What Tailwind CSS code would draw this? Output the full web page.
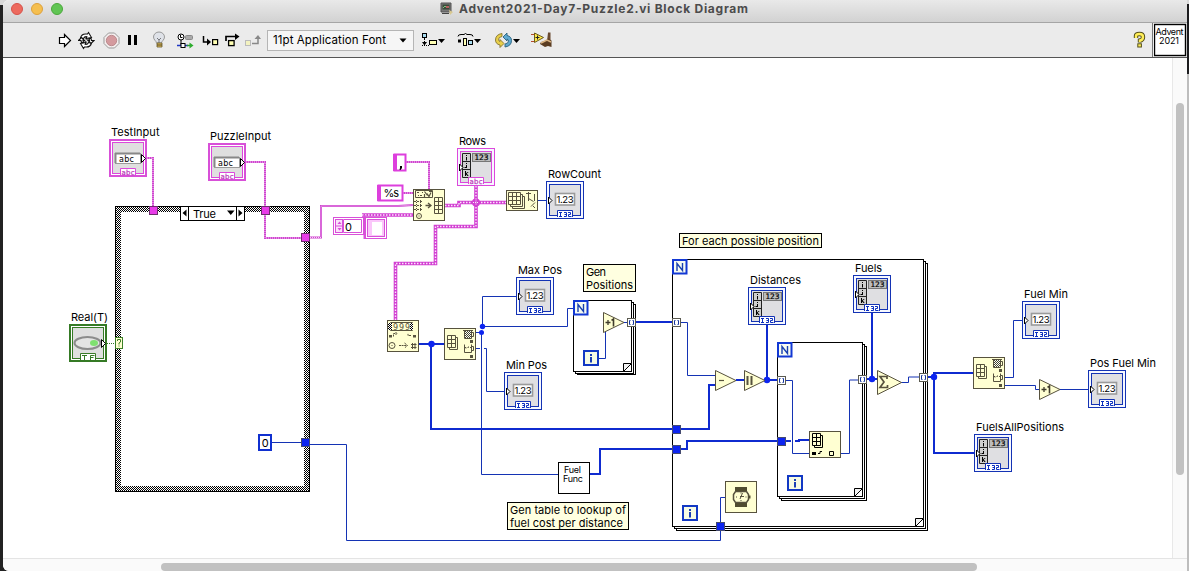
<!DOCTYPE html>
<html lang="en">
<head>
<meta charset="utf-8">
<title>Advent2021-Day7-Puzzle2.vi Block Diagram</title>
<script src="https://cdn.jsdelivr.net/npm/@tailwindcss/browser@4"></script>
</head>
<body class="h-[571px] w-[1189px] overflow-hidden bg-[#222] font-[Inter,'Liberation_Sans',sans-serif] text-black">
<div class="flex h-full bg-linear-to-b from-[#d8d8d8] from-[5px] to-[#222] to-[5px]">
<main class="ml-[3px] flex w-[1184px] flex-col overflow-hidden rounded-tl-md rounded-bl-md bg-white">
  <header class="flex h-[23px] shrink-0 border-b border-[#a5a5a5] bg-linear-to-b from-[#e9e9e9] to-[#d2d2d2]">
    <div class="ml-2 mt-[3px] flex gap-2">
      <span class="size-3 rounded-full border border-[#d6524a] bg-[#ed6a5e]"></span>
      <span class="size-3 rounded-full border border-[#dca03c] bg-[#f5bf4f]"></span>
      <span class="size-3 rounded-full border border-[#4ba73c] bg-[#61c554]"></span>
    </div>
    <svg class="ml-[376px] mt-[1px] shrink-0" width="16" height="16" viewBox="0 0 16 16"><path d="M2 2h10v9H2z" fill="#777" stroke="#555"/><path d="M3.500 3.500h7v5h-7z" fill="#3a4a3a"/><path d="M4 7l2-2 2 2 2-2" stroke="#7ec27e" fill="none"/><path d="M7 5h3v2H7z" fill="#b46060"/><path d="M10 9l4 2-3 3z" fill="#d8c890"/><path d="M3 12h7v1H3z" fill="#444"/></svg>
    <svg class="shrink-0" width="296" height="22" viewBox="455 0 296 22"><text x="459" y="13" font-size="12" font-weight="700" fill="#4c4c4c" textLength="289">Advent2021-Day7-Puzzle2.vi Block Diagram</text></svg>
  </header>
  <div class="flex h-[35px] shrink-0 items-center border-b border-[#555] bg-[#ebebeb]">
    <svg class="ml-[55px] shrink-0" width="14" height="24" viewBox="58 28 14 24"><path d="M59.500 37.500h5v-3l6 6-6 6v-3h-5z" fill="#fff" stroke="#000" stroke-width="1.200"/></svg>
    <svg class="ml-1.5 shrink-0" width="17" height="24" viewBox="78 28 17 24"><g fill="#fff" stroke="#111" stroke-width="1.100"><path d="M80.500 38q1-4 5-4h2l1-1.500 3 5-5.500 1 .8-1.800q-2.300-.4-3.300 1.800z"/><path d="M91.500 43q-1 4-5 4h-2l-1 1.500-3-5 5.500-1-.8 1.800q2.300.4 3.300-1.800z"/><path d="M78.500 40.500l3-3 3.500 3.500-2-.5.500 2h-2l-.5-2zM94 40.500l-3 3-3.500-3.500 2 .5-.5-2h2l.5 2z"/></g></svg>
    <svg class="ml-2 shrink-0" width="17" height="24" viewBox="103 28 17 24"><path d="M108.500 33h6l4.500 4.500v6l-4.500 4.500h-6l-4.500-4.500v-6z" fill="#f4eeee" stroke="#999"/><circle cx="111.500" cy="40.500" r="5.200" fill="#d49a9e" stroke="#bb8a8d"/></svg>
    <svg class="ml-2 shrink-0" width="10" height="24" viewBox="128 28 10 24"><path d="M128 35h3v10h-3zM134 35h3v10h-3z"/></svg>
    <svg class="ml-[14px] shrink-0" width="14" height="24" viewBox="152 28 14 24"><path d="M156.500 43c0-2-3-3-3-6a5.500 5 0 0 1 11 0c0 3-3 4-3 6z" fill="#dfe2e8" stroke="#999"/><path d="M157 38l2 2 2-2M159 40v3" fill="none" stroke="#77797e"/><path d="M157 43h5v4h-5z" fill="#e0bd59" stroke="#63552c" stroke-width=".8"/><path d="M157 45h5" stroke="#554722"/></svg>
    <svg class="ml-[11px] shrink-0" width="17" height="24" viewBox="177 28 17 24"><circle cx="181" cy="37" r="3" fill="#fff" stroke="#000"/><path d="M180.500 35v2.500h2M181 40v6" fill="none" stroke="#000"/><rect x="185.500" y="35.500" width="7" height="4" rx="1" fill="#aaa" stroke="#888"/><path d="M177 45.500h5M185 45.500h3" stroke="#1d36c4" stroke-width="1.500"/><rect x="181" y="43.500" width="4" height="4" fill="#fff" stroke="#000"/><path d="M187 45.500h3" stroke="#2a9a2a" stroke-width="1.500"/><path d="M189.500 42.500l4 3-4 3z" fill="#2fad2f"/></svg>
    <svg class="ml-2 shrink-0" width="18" height="24" viewBox="202 28 18 24"><path d="M203.500 36v6h5" fill="none" stroke="#000" stroke-width="1.500"/><path d="M207 38.500l4 3.500-4 3.500z"/><rect x="212.600" y="39.600" width="5" height="5" fill="#ffffb4" stroke="#000" stroke-width="1.200"/></svg>
    <svg class="ml-1 shrink-0" width="16" height="24" viewBox="224 28 16 24"><path d="M226 41v-4.500h10" fill="none" stroke="#000" stroke-width="1.700"/><path d="M235 33.500l4.500 3-4.500 3.500z"/><rect x="228.600" y="40.600" width="5.500" height="5" fill="#ffffb4" stroke="#000" stroke-width="1.300"/></svg>
    <svg class="ml-1 shrink-0" width="17" height="24" viewBox="244 28 17 24"><rect x="245.500" y="40.500" width="5" height="5" fill="#f3f2c0" stroke="#bbb"/><path d="M252 43.500h6v-5" fill="none" stroke="#888" stroke-width="1.500"/><path d="M254.500 39l3.500-4 3 4z" fill="#888"/></svg>
    <div class="ml-[6px] flex h-[21px] w-[147px] shrink-0 items-center justify-between border border-[#b5b5b5] bg-[#f6f6f6] pl-[5px] pr-1.5">
      <svg width="116" height="18" viewBox="0 0 116 18"><text x="0" y="12.500" font-size="11.500" textLength="113">11pt Application Font</text></svg>
      <svg width="8" height="5" viewBox="0 0 8 5"><path d="M.500.500h7L4 4.500z"/></svg>
    </div>
    <svg class="ml-[6px] shrink-0" width="26" height="24" viewBox="420 28 26 24"><rect x="422.500" y="33.500" width="4" height="4" fill="#a8dcf0" stroke="#000"/><path d="M424.500 38v6" stroke="#000" stroke-dasharray="2 1"/><path d="M422 42h5l-2.500 3.500z"/><rect x="429.500" y="40.500" width="7" height="4" fill="#ffffb4" stroke="#000"/><path d="M422 45.500h7" stroke="#000" stroke-dasharray="1 1"/><path d="M438 39h7l-3.500 4z"/></svg>
    <svg class="ml-[11px] shrink-0" width="25" height="24" viewBox="457 28 25 24"><path d="M458 36.500q0-2 3-2h3l1.500-1 1.500 1h3q3 0 3 2" fill="none" stroke="#000"/><path d="M458 39.500h3v3h-3z"/><rect x="463.500" y="38.500" width="3" height="7" fill="#ffffb4" stroke="#000"/><rect x="468.500" y="40.500" width="4" height="4" fill="#a8dcf0" stroke="#000"/><path d="M474 39h7l-3.500 4z"/></svg>
    <svg class="ml-3 shrink-0" width="27" height="24" viewBox="494 28 27 24"><path d="M502 33.500q-6.500 1-6.500 6.500 0 4 4.500 5v2.500l4-4-4-4v2q-1.500-.5-1.500-2 0-2.500 3.500-3z" fill="#e8cf4a" stroke="#84742c" stroke-width=".9"/><path d="M505 47q6.500-1 6.500-6.500 0-4-4.500-5V33l-4 4 4 4v-2q1.500.5 1.500 2 0 2.500-3.500 3z" fill="#5fa9d0" stroke="#28627f" stroke-width=".9"/><path d="M513 39h7l-3.500 4z"/></svg>
    <svg class="ml-2.5 shrink-0" width="22" height="24" viewBox="531 28 22 24"><path d="M531 34.500h4M531 41.500h4" stroke="#b54a2c"/><path d="M548 32.500h2.500v7l.5 3-4-1z" fill="#6a4a30"/><path d="M541 42q5-1 7-3.500l3.500 2v6.500l-3.500-1-3 1-5-3z" fill="#5a3c22"/><path d="M541 43l6-3 4 2" stroke="#d9b382" stroke-width="1.500" fill="none"/><path d="M534.500 33l9 4.500-9 5z" fill="#ffe94b" stroke="#6e5b1b"/><path d="M537.500 35.500v4M535.500 37.500h4" stroke="#222"/></svg>
    <svg class="ml-auto mr-[5px] shrink-0" width="14" height="24" viewBox="1133 28 14 24"><path d="M1136 38v-2q0-2 3.500-2t3.500 3-3 3.500v2" fill="none" stroke="#55501c" stroke-width="4.400"/><path d="M1136 38v-2q0-2 3.500-2t3.500 3-3 3.500v1.500" fill="none" stroke="#ffee58" stroke-width="2.400"/><rect x="1137.800" y="43.800" width="3.600" height="3.200" fill="#ffee58" stroke="#55501c"/></svg>
    <div class="flex h-full w-[35px] items-center border-l border-[#777]">
      <svg class="ml-px" width="33" height="34" viewBox="1154 23 33 34"><rect x="1154.500" y="24.500" width="31" height="31" fill="#fff" stroke="#000" stroke-width="1.400"/><text x="1155.500" y="35" font-size="9" textLength="28">Advent</text><text x="1159" y="44" font-size="9" textLength="20">2021</text></svg>
    </div>
  </div>
  <div class="flex h-[500px] shrink-0">
    <svg class="block shrink-0" width="1169" height="500" viewBox="3 58 1169 500" font-size="11" font-family="Inter, 'Liberation Sans', sans-serif">
      <defs>
        <pattern id="chk" width="2" height="2" patternUnits="userSpaceOnUse"><rect width="2" height="2" fill="#fff"/><path d="M0 0h1v1H0zM1 1h1v1H1z" shape-rendering="crispEdges"/></pattern>
        <pattern id="chk2" width="4" height="4" patternUnits="userSpaceOnUse"><rect width="4" height="4" fill="#fff"/><path d="M0 0h1v1H0zM2 0h1v1H2zM1 1h1v1H1zM3 1h1v1H3zM0 2h1v1H0zM2 2h1v1H2zM1 3h1v1H1zM3 3h1v1H3z" shape-rendering="crispEdges"/></pattern>
        <g id="tri"><path d="M2.500 16v7l3.500-3.500z" fill="#fff" stroke="#000"/></g>
        <g id="tab"><path d="M11.500 36v-6.500h15V36" fill="#fff" stroke="currentColor"/></g>
        <g id="i32"><use href="#tab"/><path d="M13 31.500h3M14.500 31.500v4M13 35.500h3M18 31.500h2.500v4H18M18.500 33.500h2M22 31.500h2.500v2h-2v2h3" fill="none" stroke="#0a2ec0"/></g>
        <g id="frame"><rect x=".5" y=".5" width="37" height="37" fill="#f6f8ff" stroke="currentColor"/><rect x="3.500" y="3.500" width="31" height="31" fill="#dfdfe2" stroke="currentColor"/></g>
        <g id="num" color="#1433b4"><use href="#frame"/><rect x="9.500" y="12.500" width="19" height="11.500" fill="#fff" stroke="#9a9a9a" stroke-width="1.600"/><text x="10.500" y="22" font-size="9.500" textLength="17">1.23</text><use href="#tri"/><use href="#i32"/></g>
        <g id="ijk"><use href="#frame"/><path d="M5.500 5.500h8v24h-8zM5.500 13.500h8M5.500 21.500h8" fill="#cfcfcf" stroke="#222"/><path d="M9 7h1v1H9zM9 9h1v3.500H9zM9 15h1v1H9zM9 17h1v3H7.500v-1H9zM8 23h1v2.200l1.500-1.200h1.200l-2 1.600 2 2.400h-1.200L9 26.500V28H8z"/><rect x="15.500" y="5.500" width="18" height="8" fill="#bcbcbc" stroke="#777"/><text x="17.500" y="12.300" font-family="'DejaVu Sans'" font-size="7.500" textLength="14" stroke="#000" stroke-width=".2">123</text><use href="#tri"/></g>
        <g id="arr" color="#1433b4"><use href="#ijk"/><use href="#i32"/></g>
        <g id="abc" color="#dc48dc"><use href="#tab"/><text x="12.500" y="36.300" font-family="'DejaVu Sans'" font-size="7" fill="#b832b8" stroke="#b832b8" stroke-width=".2" textLength="13">abc</text></g>
        <g id="str" color="#dc48dc"><rect x="1" y="1" width="36" height="36" fill="#fff" stroke="#d850d8" stroke-width="2"/><rect x="3.500" y="3.500" width="31" height="31" fill="#dfdfdf" stroke="currentColor"/><rect x="6.500" y="14.500" width="25" height="10" fill="#fff" stroke="#9a9a9a"/><path d="M6 14.500h25M6.500 14v10" stroke="#888" stroke-width="2"/><text x="10" y="22.500" font-family="'DejaVu Sans'" font-size="8" textLength="15">abc</text><path d="M32.500 15.500v8l4-4z" fill="#fff" stroke="#000"/><use href="#abc"/></g>
        <g id="N"><rect x="1" y="1" width="13.500" height="13.500" fill="#f6fbf2" stroke="#1238d4" stroke-width="2"/><path d="M5 12V4.500l5.500 7V4" fill="none" stroke="#173fb0" stroke-width="1.400"/></g>
        <g id="I"><rect x="1" y="1" width="14" height="14" fill="#f6fbe4" stroke="#1238c4" stroke-width="2"/><path d="M7 4h2v2H7zM7 7h2v5.500H7z" fill="#1a3eb4"/></g>
        <g id="ai"><rect x=".5" y=".5" width="8" height="8" fill="#fff" stroke="#5a5a50"/><path d="M3.500 2.500h-1v4h1M5.500 2.500h1v4h-1" fill="none" stroke="#16369c"/></g>
        <g id="tb"><rect x=".5" y=".5" width="8" height="8" fill="#0c24f0" stroke="#444a70"/></g>
        <g id="tp"><rect x=".5" y=".5" width="8" height="8" fill="#e83ce8" stroke="#6c2c6c"/></g>
        <g id="fold"><path d="M0 8.500V0h9z" fill="#f2f2f2"/><path d="M8.500 .5H.5v8l8-8" fill="none" stroke="#000"/></g>
        <g id="mm"><rect x=".5" y=".5" width="31" height="31" fill="#ffffd2" stroke="#57523e"/><path d="M3.500 7.500h8v12h-8zM3.500 11.500h8M3.500 15.500h8M7.500 7.500v12M11.500 9.500h2v12h-8v-2" fill="none" stroke="#57523e"/><rect x="20" y="3" width="8" height="7" fill="url(#chk)" opacity=".75"/><path d="M20.500 2.500h7v8h-7zM27.500 4.500h2v4h-2M20.500 16.500v8h7v-8M21 19.500h1v1M23.500 19.500h1v-1M26 19.500h1M27.500 18.500h2v4h-2M19 2.500h10" fill="none" stroke="#57523e"/><path d="M26 12h3v3h-3zM26 27h3v3h-3z" fill="#57523e"/></g>
        <g id="inc" fill="none" stroke="#403c2c"><path d="M2 10.500h5M4.500 8v5" stroke-width="1.300"/><path d="M8 8.300l2-1.300v7.500" stroke-width="1.600"/></g>
      </defs>
      <rect x="3" y="58" width="1169" height="500" fill="#fff"/>

      <!-- structures -->
      <path fill-rule="evenodd" fill="url(#chk2)" d="M115 206h195v286H115zM121 212v274h183V212z"/>
      <rect x="115.500" y="206.500" width="194" height="285" fill="none" stroke="#000"/>
      <g fill="#fff" stroke="#000">
        <rect x="577.500" y="304.500" width="58" height="70"/><rect x="575.500" y="302.500" width="58" height="71"/><rect x="573.500" y="300.500" width="58" height="71"/>
        <rect x="676.500" y="263.500" width="251" height="267"/><rect x="674.500" y="261.500" width="251" height="267"/><rect x="672.500" y="259.500" width="251" height="267"/>
        <rect x="781.500" y="346.500" width="85" height="154"/><rect x="779.500" y="344.500" width="85" height="154"/><rect x="777.500" y="342.500" width="85" height="154"/>
      </g>
      <use href="#fold" x="623" y="363"/><use href="#fold" x="915" y="518"/><use href="#fold" x="854" y="488"/>

      <!-- string wires -->
      <path d="M147 158h6v49M246 162h19v76h37M310 237.500h11V206h77l15-1M406 162h23v27M403 193h10" fill="none" stroke="#cf45cf" stroke-width="2"/>
      <path d="M147 158h6v49M246 162h19v76h37M310 237.500h11V206h77l15-1M406 162h23v27M403 193h10" fill="none" stroke="#f6cdf6" stroke-dasharray="1 1"/>
      <path fill="none" stroke="#d23fd2" stroke-width="3.600" d="M362 215h51M445 205.500h14v-3h47M476 186v40.500h-40.500v37h-40V320"/>
      <path fill="none" stroke="#fbe6fb" stroke-width="1.400" stroke-dasharray="1.500 1.500" d="M362 215h51M445 205.500h14v-3h47M476 186v40.500h-40.500v37h-40V320"/>
      <circle cx="476" cy="202.500" r="4" fill="#d23fd2"/><path d="M473 202.500h6M476 199.500v6" stroke="#fbe6fb" stroke-dasharray="1 1"/>

      <!-- scalar wires -->
      <path fill="none" stroke="#1433b4" d="M538 200.500h8M476 332.500h5M482.500 326V296.500H517M482.500 326.500h85v-18h6M481.500 332.500v142h77M476 348.500h4M484 348.500h2.500v43h18M599 358.500h6.500V332M624 322.500h4M681 322.500h6.500v53H716M786 380.500h6.500v73H809M841 453.500h8.500v-73.500h9M901 382.500h7.500v-5.500h11M725 497.500h-4.500v43h-374v-96H310M272 442.500h29M1005 377.500h8.500v-57h9M1005 385.500h30.500v4h4M1060 389.500h28"/>
      <!-- array wires -->
      <path fill="none" stroke="#0f2bd0" stroke-width="2" d="M419 344h25M431 344v85h242M635 322h38M681 429h28v-44h7M590 474h10v-25h73M681 449h6v-8h91M786 441h5M795 441h4v-1h10M736 380h8M765 380h13M767 325v55M867 379h10M872 313v66M927 377h7M934 377v-4h39M934 377v76h40"/>
      <g fill="#0c24f0"><circle cx="431.500" cy="344" r="3.200"/><circle cx="482.500" cy="326.500" r="2.700"/><circle cx="481.500" cy="332.500" r="2.500"/><circle cx="767" cy="380" r="3.200"/><circle cx="872" cy="379" r="3.200"/><circle cx="934" cy="377" r="3.200"/></g>

      <!-- tunnels -->
      <use href="#tp" x="149" y="206"/><use href="#tp" x="261" y="206"/><use href="#tp" x="301" y="233"/>
      <use href="#tb" x="301" y="438"/><use href="#tb" x="672" y="425"/><use href="#tb" x="672" y="445"/><use href="#tb" x="777" y="437"/><use href="#tb" x="716" y="522"/>
      <use href="#ai" x="627" y="318"/><use href="#ai" x="672" y="318"/><use href="#ai" x="777" y="376"/><use href="#ai" x="858" y="375"/><use href="#ai" x="919" y="373"/>
      <use href="#N" x="573" y="300"/><use href="#N" x="672" y="259"/><use href="#N" x="777" y="342"/>
      <use href="#I" x="583" y="350"/><use href="#I" x="682" y="505"/><use href="#I" x="787" y="475"/>

      <!-- case selector -->
      <rect x="180.500" y="206.500" width="64" height="14" fill="#fff" stroke="#000"/><path d="M188.500 206v15M236.500 206v15" stroke="#000"/><path d="M186.500 209.500v7l-4-3.500zM238.500 209.500v7l4-3.500zM227 210.500h7.500l-3.700 4.500z"/><text x="193" y="218" textLength="23">True</text>
      <path d="M107 343.500h8" stroke="#2f7a20" stroke-dasharray="1 1"/>
      <rect x="115.500" y="337.500" width="7" height="11" fill="#ffffd0" stroke="#3c8028"/><path d="M117.500 341v-1.500h3v2.500l-1.500 1v1.500M118.500 346h1" fill="none" stroke="#3c8028"/>

      <!-- terminals -->
      <use href="#str" x="109" y="139"/><use href="#str" x="208" y="143"/>
      <g color="#dc48dc"><use href="#ijk" x="457" y="148"/><use href="#abc" x="457" y="148"/></g>
      <use href="#num" x="546" y="181"/><use href="#num" x="516" y="277"/><use href="#num" x="504" y="372"/><use href="#num" x="1022" y="301"/><use href="#num" x="1088" y="370"/>
      <use href="#arr" x="748" y="287"/><use href="#arr" x="853" y="275"/><use href="#arr" x="974" y="434"/>
      <g transform="translate(69 324)" color="#3a7a28"><rect x="1" y="1" width="36" height="36" fill="#fff" stroke="#357a25" stroke-width="2"/><rect x="3.500" y="3.500" width="31" height="31" fill="#dfdfdf" stroke="#357a25"/><ellipse cx="18.500" cy="19" rx="13" ry="6" fill="#e4e4e4" stroke="#8c8c8c" stroke-width="2"/><ellipse cx="25" cy="19" rx="4" ry="3" fill="#7fe070"/><path d="M32.500 15.500v8l4-4z" fill="#fff" stroke="#000"/><use href="#tab"/><path d="M13 31.500h5M15.500 31.500v4.500M21.500 36v-4.500h4M21.500 33.500h3" fill="none" stroke="#357a25"/></g>

      <!-- constants -->
      <rect x="394.500" y="154.500" width="11" height="16" fill="#fff" stroke="#dd3fdd" stroke-width="2"/><path d="M395 154v17" stroke="#dd3fdd" stroke-width="4"/><path d="M400 166h2v2l-1.500 2h-1l.5-2z"/>
      <rect x="378.500" y="185.500" width="24" height="15" fill="#fff" stroke="#dd3fdd" stroke-width="2"/><path d="M379 185v16" stroke="#dd3fdd" stroke-width="4"/><text x="383.500" y="197" textLength="15.500">%s</text>
      <rect x="333.500" y="217.500" width="30" height="17" fill="#fff" stroke="#d850d8"/><rect x="335.500" y="219.500" width="7" height="13" fill="#fbe0fb" stroke="#d850d8"/><path d="M336 226h7" stroke="#d850d8"/><path d="M337.500 224h4l-2-2.500zM337.500 228h4l-2 2.500z" fill="#d850d8"/><path d="M343.500 219.500h18v13h-18z" fill="#fff" stroke="#d850d8"/><text x="345" y="231">0</text>
      <path d="M364.500 215v24" stroke="#d850d8" stroke-width="2"/><rect x="365.500" y="217.500" width="21" height="21" fill="#fff" stroke="#d850d8"/><rect x="367.500" y="219.500" width="17" height="17" fill="#fac6fa" stroke="#d850d8"/><rect x="372" y="222" width="10" height="13" fill="#fff"/>
      <rect x="259" y="435" width="12" height="15" fill="#fff" stroke="#1030d0" stroke-width="2"/><text x="261.700" y="446.500">0</text>

      <!-- function nodes -->
      <g fill="#ffffd2" stroke="#57523e"><rect x="413.500" y="189.500" width="31" height="31"/><rect x="506.500" y="190.500" width="31" height="20"/><rect x="387.500" y="320.500" width="31" height="31"/><rect x="809.500" y="431.500" width="31" height="26"/><rect x="725.500" y="481.500" width="31" height="31"/>
        <path d="M603.500 312.500v20l20.500-10zM715.500 370.500v20l20.500-10zM744.500 370.500v20l20.500-10zM877.500 370.500v24l24-12zM1039.500 379.500v20l20.500-10z"/></g>
      <g fill="none" stroke="#57523e">
        <path d="M415.500 190.500h17v7h-17z"/><path d="M417 192.500h2M420 195.500h2M418 195.500h1M422 192.500h1M424.500 194v3M424.500 191.500l3 4M427 193.500l2 3 2-4M429 191.500h3" stroke-width="1.200"/>
        <path d="M414 201.500h9M414 205.500h9M414 209.500h9" stroke-dasharray="2 1"/><path d="M416.500 200v12M420.500 200v12" stroke-dasharray="1 1"/><path d="M425.500 205.500h5M428 203l3 2.500-3 2.500" stroke-width="1.300"/><circle cx="419" cy="216" r="2.500"/><path d="M418.500 216h1"/>
        <path d="M434.500 197.500h8v16h-8zM438.500 197.500v16M434.500 201.500h8M434.500 205.500h8M434.500 209.500h8"/>
        <path d="M508.500 192.500h12v12h-12zM512.500 192.500v12M516.500 192.500v12M508.500 196.500h12M508.500 200.500h12M520.500 194.500h2v12h-12v-2M522.500 196.500h2v12h-12v-2"/><path d="M526 193.500h5M528.500 192v9M528.500 198.500l5 3M531 206.500l4-4M533 206l2 2M534.500 194v7"/>
        <path d="M390.500 322.500h22v8h-22z"/><path d="M388 323h4v7h-4zM410 323h3v7h-3z" fill="url(#chk)" stroke="none"/>
        <path d="M393.500 336.500v-3h3M395.500 332l1.500 1.500-1.500 1.500M411 335.500h-3v-2M399 345.500h8M404.500 343l3 2.500-3 2.500" stroke-dasharray="2 .6"/><path d="M411 344.500h5.500M411 347.500h5.500M412.500 343v6M415 343v6"/><circle cx="392" cy="345.500" r="3"/><path d="M391.500 345.500h1"/>
      </g>
      <path d="M389 335h3v2.500h-3zM413 335h3v2.500h-3z" fill="#57523e"/>
      <text x="393" y="329.500" font-family="'DejaVu Sans'" font-size="8" fill="#57523e" textLength="17">999</text>
      <use href="#mm" x="444" y="328"/><use href="#mm" x="973" y="357"/>
      <g fill="none" stroke="#000"><path d="M812.500 433.500h8v12h-8zM816.500 433.500v12M812.500 437.500h8M812.500 441.500h8M820.500 435.500h2v12h-8v-2M829.500 451.500h4v4h-4zM818 453.500h2v-2h2"/></g><path d="M812 452h4v3h-4z"/>
      <g fill="none" stroke="#57523e"><path d="M735.500 491.500h11l2 3v5l-2 3h-11l-2-3v-5z" stroke-width="1.500"/><path d="M742.500 493l-2.500 6M740 496.500h4M736 497h1M745.500 497h1M740.500 500.500h1M740.500 493h1"/></g><path d="M735 487h12v4h-12zM735 503h12v4h-12zM748.500 495.500h2v3h-2z" fill="#504c30"/>
      <use href="#inc" x="603.500" y="312"/><use href="#inc" x="1039.500" y="379"/>
      <g fill="none" stroke="#57523e"><path d="M719 380.500h5" stroke-width="1.200"/><path d="M747.500 376v9M751.500 376v9" stroke-width="2"/><path d="M887 379v-2.500h-7l4 5.500-4 5.500h7.500V385" stroke-width="1.700"/></g>
      <rect x="558.500" y="462.500" width="31" height="31" fill="#fff" stroke="#000"/><text x="564" y="473" font-size="9" textLength="17">Fuel</text><text x="563" y="482" font-size="9" textLength="20">Func</text>

      <!-- comments and labels -->
      <g fill="#ffffe0" stroke="#000"><rect x="583.500" y="264.500" width="52" height="27"/><rect x="679.500" y="233.500" width="142" height="14"/><rect x="507.500" y="502.500" width="121" height="27"/></g>
      <text x="586" y="276" textLength="20">Gen</text><text x="586" y="289" textLength="47">Positions</text>
      <text x="682" y="245" textLength="137">For each possible position</text>
      <text x="510" y="514" textLength="116">Gen table to lookup of</text><text x="510" y="527" textLength="113">fuel cost per distance</text>
      <text x="111" y="136" textLength="48.500">TestInput</text><text x="210" y="140" textLength="61">PuzzleInput</text><text x="459" y="145" textLength="27">Rows</text><text x="548" y="178" textLength="53">RowCount</text>
      <text x="518" y="274" textLength="44">Max Pos</text><text x="506" y="369" textLength="41">Min Pos</text><text x="750" y="284" textLength="51">Distances</text><text x="855" y="272" textLength="27">Fuels</text>
      <text x="1024" y="298" textLength="44">Fuel Min</text><text x="1090" y="367" textLength="66">Pos Fuel Min</text><text x="976" y="431" textLength="88">FuelsAllPositions</text><text x="71" y="321" textLength="37">Real(T)</text>
    </svg>
    <div class="w-[15px] border-l border-[#e8e8e8] bg-[#fafafa] pl-[3px] pt-[45px]"><div class="h-[372px] w-2 rounded-full bg-[#c1c1c1]"></div></div>
  </div>
  <div class="h-[13px] border-t border-[#e4e4e4] bg-[#fafafa] pl-[158px] pt-1"><div class="h-2 w-[816px] rounded-full bg-[#c1c1c1]"></div></div>
</main>
<aside class="flex w-0.5 flex-col"><div class="h-1 bg-[#d8d8d8]"></div><div class="h-[70px] bg-[#1c1c1e]"></div><div class="grow bg-[#bdbdbd]"></div></aside>
</div>
</body>
</html>
